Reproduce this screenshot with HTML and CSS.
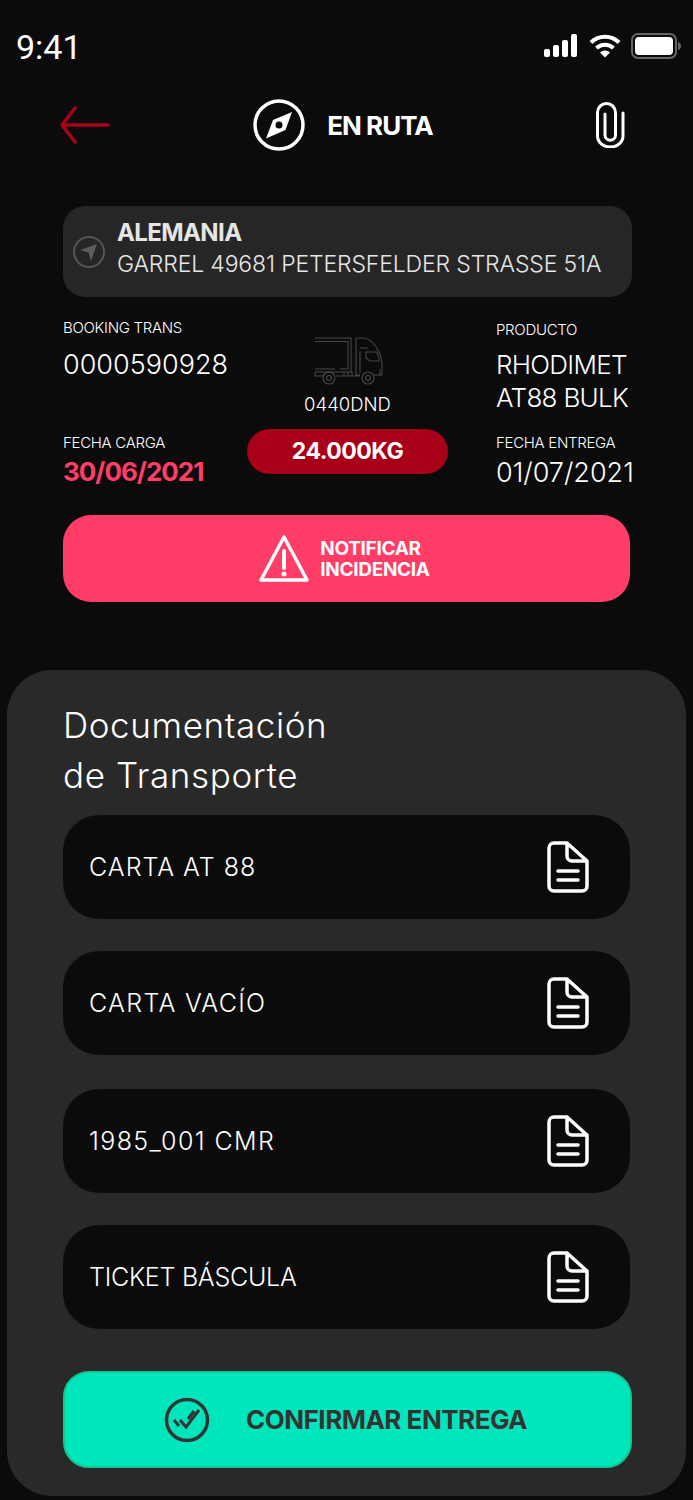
FILE: index.html
```html
<!DOCTYPE html>
<html>
    <head>
        <meta charset="utf-8">
        <title>En ruta</title>
        <link rel="stylesheet" href="styles.css">
    </head>
    <body>
        <div id="statusbar">
            <span id="clock">9:41</span>
            <div id="statusicons">
                <svg width="36" height="24" viewBox="0 0 36 24" fill="#fff">
                    <rect x="1" y="15" width="6" height="8" rx="2"/>
                    <rect x="10" y="11" width="6" height="12" rx="2"/>
                    <rect x="19" y="6" width="6" height="17" rx="2"/>
                    <rect x="28" y="0" width="6" height="23" rx="2"/>
                </svg>
                <svg width="32" height="24" viewBox="0 0 32 24" fill="none" stroke="#fff" stroke-width="4">
                    <path d="M2 8.500a20 20 0 0 1 28 0"/>
                    <path d="M7.500 14a12.500 12.500 0 0 1 17 0"/>
                    <path d="M11 18.500l5 5 5-5a7 7 0 0 0-10 0z" fill="#fff" stroke="none"/>
                </svg>
                <svg width="50" height="26" viewBox="0 0 50 26">
                    <rect x="1" y="1" width="44" height="24" rx="6" fill="none" stroke="#666" stroke-width="2"/>
                    <rect x="4" y="4" width="38" height="18" rx="4" fill="#fff"/>
                    <path d="M47 9c2 .5 3 2 3 4s-1 3.500-3 4z" fill="#666"/>
                </svg>
            </div>
        </div>

        <div id="nav">
            <svg class="back" width="50" height="38" viewBox="0 0 50 38" fill="none" stroke="#a90019" stroke-width="3.500" stroke-linecap="round" stroke-linejoin="round">
                <path d="M48 19H2M15 2L2 19l13 17"/>
            </svg>
            <div id="title">
                <svg width="52" height="52" viewBox="0 0 52 52">
                    <circle cx="26" cy="26" r="24" fill="none" stroke="#fff" stroke-width="3.500"/>
                    <path fill-rule="evenodd" d="M39 13l-6.500 18L13 39.500 20 21zM26 22.500a3.500 3.500 0 1 0 0 7 3.500 3.500 0 0 0 0-7z" fill="#fff"/>
                </svg>
                <span>EN RUTA</span>
            </div>
            <svg class="clip" width="30" height="46" viewBox="0 0 30 46" fill="none" stroke="#fff" stroke-width="3" stroke-linecap="round">
                <path d="M27 11V34a12.750 11 0 0 1-25.500 0V10.500a9 9 0 0 1 18 0V33a5.250 5.250 0 0 1-10.500 0V12"/>
            </svg>
        </div>

        <div id="address">
            <svg width="34" height="34" viewBox="0 0 34 34">
                <circle cx="17" cy="17" r="15" fill="none" stroke="#555" stroke-width="2"/>
                <path d="M25 9L19 26l-2.500-8.500L8 15z" fill="#5c5c5c"/>
            </svg>
            <div class="place">
                <p class="country">ALEMANIA</p>
                <p class="street">GARREL 49681 PETERSFELDER STRASSE 51A</p>
            </div>
        </div>

        <div id="details">
            <div class="cell">
                <p class="label">BOOKING TRANS</p>
                <p class="value booking">0000590928</p>
            </div>
            <div class="cell truck">
                <svg width="70" height="50" viewBox="0 0 70 50" fill="none" stroke="#484848" stroke-width="1.100">
                    <path d="M1 1h36v31M1 4.500h33V32H26M1 32h20M1 35h36v-3M1 35v4h8"/>
                    <path d="M42 1v38M42 1h6c8 0 14 7 17 14 2 4 3 8 3 14v9h-8M42 38h4M22 39h24"/>
                    <path d="M52 15h11l2 6v3H56l-4-3zM46 11h8M46 14v22"/>
                    <path d="M30 35v4M34 35v4M38 35v4M66 32v6"/>
                    <circle cx="15" cy="41" r="6"/><circle cx="15" cy="41" r="2.500"/>
                    <circle cx="54" cy="41" r="6"/><circle cx="54" cy="41" r="2.500"/>
                </svg>
                <p class="plate">0440DND</p>
            </div>
            <div class="cell topright">
                <p class="label">PRODUCTO</p>
                <p class="value product">RHODIMET<br>AT88 BULK</p>
            </div>
            <div class="cell">
                <p class="label">FECHA CARGA</p>
                <p class="value loaddate">30/06/2021</p>
            </div>
            <div class="cell">
                <p class="weight">24.000KG</p>
            </div>
            <div class="cell">
                <p class="label">FECHA ENTREGA</p>
                <p class="value date">01/07/2021</p>
            </div>
        </div>

        <button id="notify">
            <svg width="50" height="48" viewBox="0 0 50 48" fill="none" stroke="#fff" stroke-width="3.500" stroke-linejoin="round">
                <path d="M25 2L2 45h46z"/>
                <path d="M25 16v17" stroke-width="4" stroke-linecap="round"/>
                <circle cx="25" cy="39" r="2.500" fill="#fff" stroke="none"/>
            </svg>
            <span>NOTIFICAR<br>INCIDENCIA</span>
        </button>

        <div id="panel">
            <h2>Documentación<br>de Transporte</h2>
            <div class="doc">
                <span>CARTA AT 88</span>
                <svg class="docicon" width="42" height="52" viewBox="0 0 42 52" fill="none" stroke="#fff" stroke-width="3.500" stroke-linecap="round" stroke-linejoin="round"><path d="M20 2H7a5 5 0 0 0-5 5v38a5 5 0 0 0 5 5h28a5 5 0 0 0 5-5V20L20 2zM20 2v13a5 5 0 0 0 5 5h15M11 30h20M11 39h20"/></svg>
            </div>
            <div class="doc vacio">
                <span>CARTA VACÍO</span>
                <svg class="docicon" width="42" height="52" viewBox="0 0 42 52" fill="none" stroke="#fff" stroke-width="3.500" stroke-linecap="round" stroke-linejoin="round"><path d="M20 2H7a5 5 0 0 0-5 5v38a5 5 0 0 0 5 5h28a5 5 0 0 0 5-5V20L20 2zM20 2v13a5 5 0 0 0 5 5h15M11 30h20M11 39h20"/></svg>
            </div>
            <div class="doc cmr">
                <span>1985_001 CMR</span>
                <svg class="docicon" width="42" height="52" viewBox="0 0 42 52" fill="none" stroke="#fff" stroke-width="3.500" stroke-linecap="round" stroke-linejoin="round"><path d="M20 2H7a5 5 0 0 0-5 5v38a5 5 0 0 0 5 5h28a5 5 0 0 0 5-5V20L20 2zM20 2v13a5 5 0 0 0 5 5h15M11 30h20M11 39h20"/></svg>
            </div>
            <div class="doc ticket">
                <span>TICKET BÁSCULA</span>
                <svg class="docicon" width="42" height="52" viewBox="0 0 42 52" fill="none" stroke="#fff" stroke-width="3.500" stroke-linecap="round" stroke-linejoin="round"><path d="M20 2H7a5 5 0 0 0-5 5v38a5 5 0 0 0 5 5h28a5 5 0 0 0 5-5V20L20 2zM20 2v13a5 5 0 0 0 5 5h15M11 30h20M11 39h20"/></svg>
            </div>
            <button id="confirm">
                <svg width="46" height="46" viewBox="0 0 46 46" fill="none" stroke="#333" stroke-width="3.500">
                    <circle cx="23" cy="23" r="20.500"/>
                    <path d="M10 23l5 6M16 23l6 7L35 13M24 22l6-8" stroke-width="3"/>
                </svg>
                <span>CONFIRMAR ENTREGA</span>
            </button>
        </div>
    </body>
</html>
```

FILE: styles.css
```css
* {
    padding: 0;
    margin: 0;
    box-sizing: border-box;
}

body {
    width: 693px;
    height: 1500px;
    overflow: hidden;
    background-color: #0b0b0b;
    color: #fff;
    font-family: Inter, "Open Sans", sans-serif;
}

#statusbar {
    display: flex;
    justify-content: space-between;
    align-items: center;
    height: 94px;
    padding: 0 12px 0 16px;
}

#clock {
    font-family: Roboto, sans-serif;
    font-size: 34px;
    font-weight: 400;
}

#statusicons {
    display: flex;
    align-items: center;
    gap: 10px;
    margin-bottom: 2px;
}

#nav {
    display: flex;
    align-items: center;
    justify-content: space-between;
    height: 62px;
    padding: 0 67px 0 60px;
}

#title {
    display: flex;
    align-items: center;
    gap: 22px;
    margin-left: -20px;
    font-size: 26px;
    font-weight: 700;
    letter-spacing: -1px;
}

#address {
    display: flex;
    align-items: center;
    gap: 11px;
    width: 569px;
    height: 91px;
    margin: 50px 0 0 63px;
    padding-left: 9px;
    background-color: #262626;
    border-radius: 22px;
}

.place {
    margin-bottom: 5px;
}

.country {
    font-size: 24px;
    line-height: 30px;
    font-weight: 700;
    letter-spacing: -0.6px;
    color: #e6e6e6;
}

.street {
    font-size: 23px;
    line-height: 32px;
    font-weight: 300;
    letter-spacing: -0.15px;
    color: #e6e6e6;
    white-space: nowrap;
}

#details {
    display: grid;
    grid-template-columns: 184px 201px 150px;
    grid-template-rows: 115px 86px;
    margin: 21px 0 0 63px;
}

.cell:nth-child(3n) {
    padding-left: 48px;
    width: 230px;
}

.topright {
    padding-top: 2px;
}

.label {
    font-size: 15px;
    line-height: 20px;
    font-weight: 300;
    letter-spacing: -0.3px;
    white-space: nowrap;
}

.value {
    font-size: 27px;
    line-height: 33px;
    font-weight: 300;
    white-space: nowrap;
}

.booking {
    margin-top: 10px;
}

.product {
    margin-top: 8px;
    font-size: 26px;
    letter-spacing: -0.7px;
}

.date {
    margin-top: 3px;
}

.loaddate {
    margin-top: 2px;
    font-size: 26px;
    font-weight: 700;
    letter-spacing: -1px;
    color: #ff3d66;
}

.truck {
    display: flex;
    flex-direction: column;
    align-items: center;
    padding-top: 19px;
}

.truck svg {
    margin-left: 2px;
}

.plate {
    margin-top: 4px;
    font-size: 18.500px;
    line-height: 26px;
    font-weight: 300;
}

.weight {
    width: 201px;
    height: 45px;
    line-height: 45px;
    margin-top: -4px;
    text-align: center;
    font-size: 23px;
    font-weight: 700;
    letter-spacing: -0.5px;
    background-color: #a90019;
    border-radius: 23px;
}

button {
    display: flex;
    align-items: center;
    border: none;
    font-family: Inter, "Open Sans", sans-serif;
    font-weight: 700;
}

#notify {
    justify-content: center;
    gap: 11px;
    width: 567px;
    height: 87px;
    margin: -4px 0 0 63px;
    padding-right: 4px;
    color: #fff;
    background-color: #ff3d66;
    border-radius: 28px;
    font-size: 19px;
    line-height: 21px;
    letter-spacing: -0.3px;
    text-align: left;
}

#panel {
    width: 679px;
    height: 826px;
    margin: 68px 0 0 7px;
    padding: 30px 0 0 56px;
    background-color: #292929;
    border-radius: 45px;
}

h2 {
    font-size: 35px;
    line-height: 50px;
    font-weight: 300;
    letter-spacing: 0.6px;
    margin-bottom: 15px;
}

.doc {
    display: flex;
    align-items: center;
    justify-content: space-between;
    width: 567px;
    height: 104px;
    margin-bottom: 32px;
    padding: 0 41px 0 26px;
    background-color: #0b0b0b;
    border-radius: 36px;
    font-size: 25px;
    font-weight: 300;
    letter-spacing: 1px;
}

.vacio {
    margin-bottom: 34px;
    letter-spacing: 1.3px;
}

.cmr {
    letter-spacing: 1.400px;
}

.ticket {
    letter-spacing: -0.25px;
}

#confirm {
    gap: 36px;
    width: 569px;
    height: 97px;
    margin-top: 42px;
    padding-left: 99px;
    color: #333;
    background-color: #00e6bc;
    border: 2px solid #0fc794;
    border-radius: 26px;
    font-size: 26px;
    letter-spacing: -0.5px;
}
```
